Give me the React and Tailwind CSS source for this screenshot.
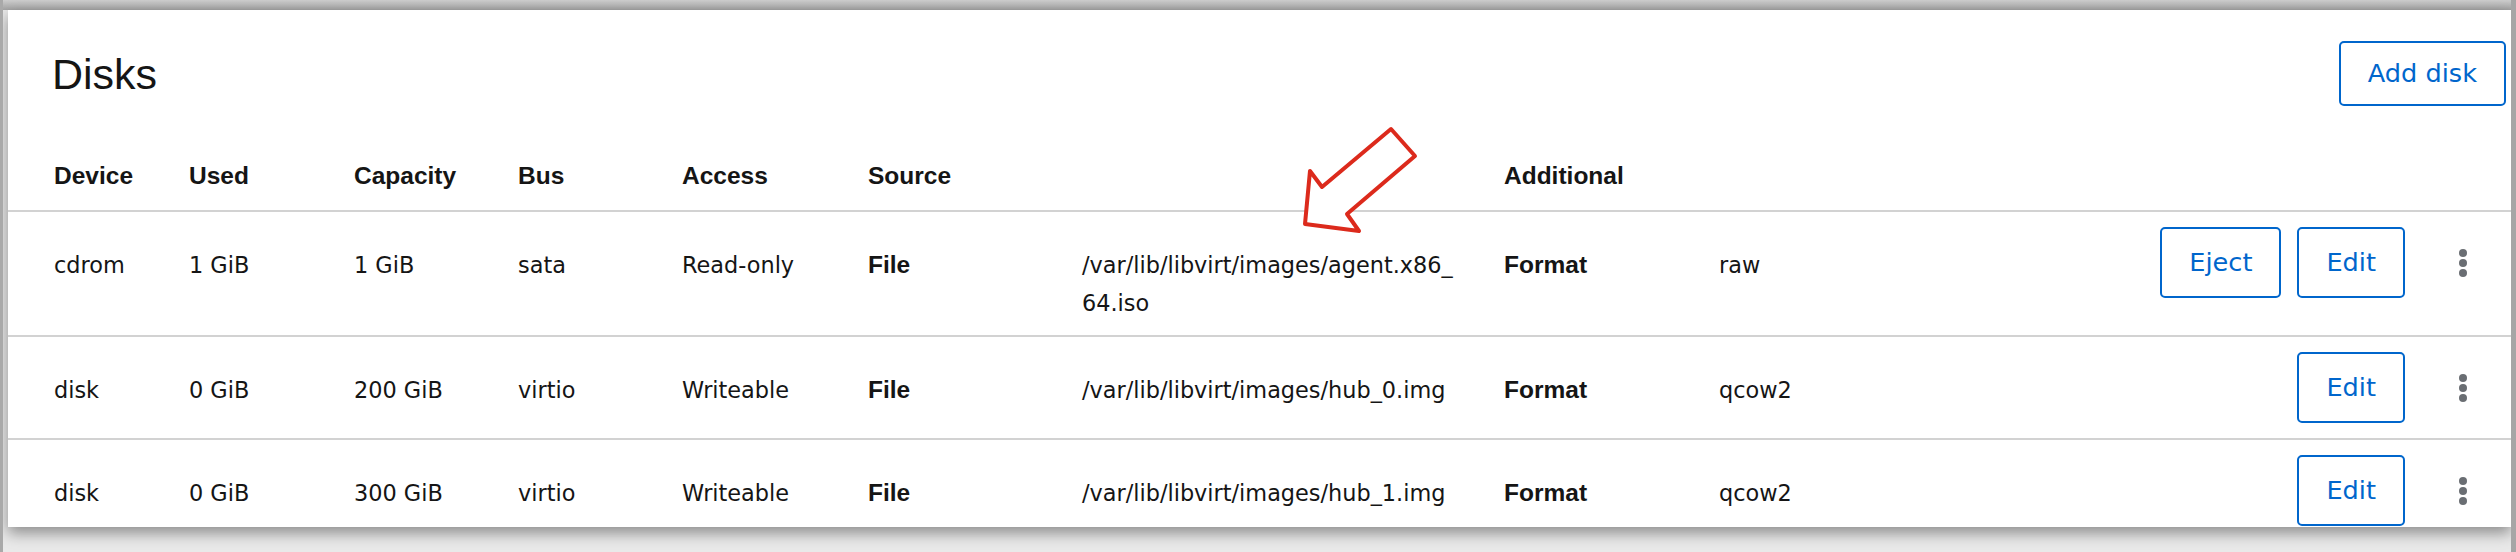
import React from "react";

const cols =
  "grid grid-cols-[135px_165px_164px_164px_186px_214px_422px_215px_1fr_auto]";

const reg = "font-['DejaVu_Sans',sans-serif] text-[22.4px] leading-[38px] text-[#151515]";
const bold = "font-['Liberation_Sans',Arial,sans-serif] font-bold text-[24.5px] leading-[38px] text-[#151515]";

function Btn({ children, h = "h-[71px]" }) {
  return (
    <button
      className={`${h} px-[27px] border-2 border-[#0066cc] rounded-[5px] bg-white text-[#0066cc] font-['DejaVu_Sans',sans-serif] text-[25.6px] leading-none flex items-center`}
    >
      {children}
    </button>
  );
}

function Kebab() {
  return (
    <div className="ml-[38px] w-[40px] flex justify-center">
      <svg width="10" height="30" viewBox="0 0 10 30" fill="#6a6e73">
        <circle cx="5" cy="5" r="4" />
        <circle cx="5" cy="15" r="4" />
        <circle cx="5" cy="25" r="4" />
      </svg>
    </div>
  );
}

function Row({ device, used, capacity, bus, access, path, format, eject }) {
  const cell = "pt-[34px] pb-[13px]";
  return (
    <div className={`${cols} pl-[46px] border-b-2 border-[#d2d2d2] items-start`}>
      <div className={`${cell} ${reg}`}>{device}</div>
      <div className={`${cell} ${reg}`}>{used}</div>
      <div className={`${cell} ${reg}`}>{capacity}</div>
      <div className={`${cell} ${reg}`}>{bus}</div>
      <div className={`${cell} ${reg}`}>{access}</div>
      <div className={`${cell} ${bold}`}>File</div>
      <div className={`${cell} ${reg}`}>{path}</div>
      <div className={`${cell} ${bold}`}>Format</div>
      <div className={`${cell} ${reg}`}>{format}</div>
      <div className="py-[15px] pr-[28px] flex items-center justify-end">
        <div className="flex gap-[16px]">
          {eject && <Btn>Eject</Btn>}
          <Btn>Edit</Btn>
        </div>
        <Kebab />
      </div>
    </div>
  );
}

export default function App() {
  return (
    <div className="w-[2516px] h-[552px] overflow-hidden bg-[#e9e9e9] border-l-[3px] border-l-[#a9a9a9] border-r-[5px] border-r-[#a6a6a6] flex flex-col">
      <div className="h-[10px] shrink-0 bg-gradient-to-b from-[#cdcdcd] to-[#a4a4a4]" />
      <div className="pl-[5px] flex-1">
        <div className="relative w-[2503px] h-[517px] bg-white overflow-hidden shadow-[0_6px_14px_rgba(0,0,0,0.4)]">
          <div className="flex justify-between items-start pl-[46px] pr-[5px] pt-[31px]">
            <h2 className="mt-[9px] ml-[-2px] font-['Liberation_Sans',Arial,sans-serif] text-[43px] leading-[48px] text-[#151515]">
              Disks
            </h2>
            <Btn h="h-[65px]">Add disk</Btn>
          </div>
          <div
            className={`${cols} pl-[46px] pt-[55px] pb-[19px] border-b-2 border-[#d2d2d2] font-['Liberation_Sans',Arial,sans-serif] font-bold text-[24.5px] leading-[30px] text-[#151515]`}
          >
            <div>Device</div>
            <div>Used</div>
            <div>Capacity</div>
            <div>Bus</div>
            <div>Access</div>
            <div className="col-span-2">Source</div>
            <div className="col-span-2">Additional</div>
            <div />
          </div>
          <Row
            device="cdrom"
            used="1 GiB"
            capacity="1 GiB"
            bus="sata"
            access="Read-only"
            path={
              <>
                /var/lib/libvirt/images/agent.x86_
                <br />
                64.iso
              </>
            }
            format="raw"
            eject
          />
          <Row
            device="disk"
            used="0 GiB"
            capacity="200 GiB"
            bus="virtio"
            access="Writeable"
            path="/var/lib/libvirt/images/hub_0.img"
            format="qcow2"
          />
          <Row
            device="disk"
            used="0 GiB"
            capacity="300 GiB"
            bus="virtio"
            access="Writeable"
            path="/var/lib/libvirt/images/hub_1.img"
            format="qcow2"
          />
          <svg
            className="absolute left-[1287px] top-[110px]"
            width="130"
            height="125"
            viewBox="0 0 130 125"
          >
            <polygon
              points="96,9 120,36 52,94 64,111 10,104 15,51 27,67"
              fill="white"
              stroke="#dc2a1c"
              strokeWidth="4"
              strokeLinejoin="round"
            />
          </svg>
        </div>
      </div>
    </div>
  );
}
